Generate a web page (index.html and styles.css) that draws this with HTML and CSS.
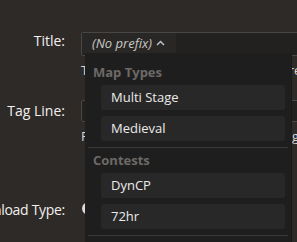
FILE: index.html
```html
<!DOCTYPE html>
<html lang="en">
<head>
  <meta charset="UTF-8">
  <title>Map Settings</title>
  <link rel="stylesheet" href="styles.css">
</head>
<body>
  <form class="settings">
    <div class="row row-title">
      <label class="field-label">Title:</label>
      <div class="field">
        <div class="prefix-input">
          <button type="button" class="prefix-toggle">
            <span>(No prefix)</span>
            <svg class="chevron" width="9" height="6" viewBox="0 0 9 6"><path d="M1 5 L4.5 1.5 L8 5" fill="none" stroke="#b9c0c8" stroke-width="1.5"/></svg>
          </button>

          <div class="prefix-menu">
            <div class="menu-group">
              <div class="menu-header">Map Types</div>
              <div class="menu-item">Multi Stage</div>
              <div class="menu-item">Medieval</div>
            </div>
            <div class="menu-sep"></div>
            <div class="menu-group">
              <div class="menu-header">Contests</div>
              <div class="menu-item">DynCP</div>
              <div class="menu-item">72hr</div>
            </div>
            <div class="menu-sep"></div>
          </div>
        </div>
        <div class="hint">The name shown in the map list, prefixed by the tag you pick here, now</div>
      </div>
    </div>

    <div class="row row-tagline">
      <label class="field-label">Tag Line:</label>
      <div class="field">
        <div class="text-input"></div>
        <div class="hint">Fits under the title in the map listing, keep it short to look good</div>
      </div>
    </div>

    <div class="row row-download">
      <label class="field-label">Download Type:</label>
      <div class="field">
        <span class="radio"></span>
      </div>
    </div>
  </form>
</body>
</html>
```

FILE: styles.css
```css
body {
  margin: 0;
  min-height: 300px;
  background: #2e2a28;
  font-family: 'Open Sans', sans-serif;
  font-size: 13px;
  color: #e6e4e1;
  overflow: hidden;
}

.settings {
  width: 420px;
  margin-left: -45px;
  padding-top: 32px;
  padding-bottom: 80px;
}

.row {
  display: grid;
  grid-template-columns: 110px 1fr;
  column-gap: 16px;
}

.field-label {
  display: flex;
  justify-content: flex-end;
  white-space: nowrap;
  font-size: 14px;
  line-height: 18px;
  color: #f2f0ee;
}

.row-tagline {
  margin-top: 21px;
}

.row-tagline .field-label {
  padding-top: 2px;
}

.row-download {
  margin-top: 56px;
}

.row-download .field-label {
  letter-spacing: -0.3px;
}

.field {
  position: relative;
}

.prefix-input,
.text-input {
  border: 1px solid #4a4644;
  background: #232120;
  border-radius: 2px;
}

.prefix-input {
  position: relative;
  height: 22px;
}

.text-input {
  height: 20px;
}

.prefix-toggle {
  display: flex;
  align-items: center;
  gap: 4px;
  height: 20px;
  padding: 0 11px 0 10px;
  border: none;
  background: #292726;
  font-family: inherit;
  font-size: 13px;
  font-style: italic;
  color: #c9c7c4;
}

.chevron {
  margin-top: -1px;
}

.prefix-menu {
  position: absolute;
  left: 3px;
  top: 20px;
  width: 206px;
  height: 240px;
  padding-top: 9px;
  background: #1f1e1e;
  border-right: 1px solid #1a1919;
  z-index: 2;
}

.menu-header {
  height: 20px;
  line-height: 20px;
  padding-left: 8px;
  margin-bottom: 3px;
  font-weight: bold;
  color: #6c6967;
}

.menu-item {
  height: 25px;
  line-height: 25px;
  margin: 0 6px 6px 16px;
  padding-left: 10px;
  background: #292828;
  border-radius: 3px;
  color: #ecebe9;
}

.menu-sep {
  height: 1px;
  margin: 2px 3px 2px 3px;
  background: #3a3837;
}

.hint {
  margin-top: 5px;
  line-height: 18px;
  white-space: nowrap;
  color: #d8d6d3;
}

.radio {
  display: block;
  width: 13px;
  height: 13px;
  margin: 1px 0 0 1px;
  border-radius: 50%;
  background: #dcdcdc;
}
```
